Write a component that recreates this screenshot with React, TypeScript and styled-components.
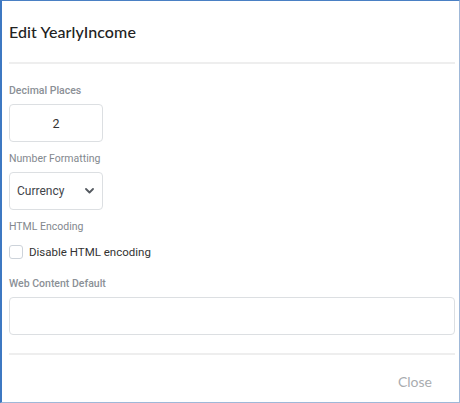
import React from "react";
import styled, { createGlobalStyle } from "styled-components";

const Global = createGlobalStyle`
  html, body { margin: 0; padding: 0; background: #fff; }
  * { box-sizing: border-box; }
`;

const Dialog = styled.div`
  width: 460px;
  height: 403px;
  background: #fff;
  border-top: 1px solid #4a80c4;
  border-left: 2px solid #3d78c2;
  border-right: 1px solid #9fb8d8;
  border-bottom: 1px solid #9fb8d8;
  display: flex;
  flex-direction: column;
  font-family: Roboto, "Liberation Sans", sans-serif;
`;

const Header = styled.div`
  height: 61px;
  display: flex;
  align-items: center;
  padding: 0 7px;
`;

const Title = styled.h1`
  margin: 0;
  font-family: Lato, "Open Sans", sans-serif;
  font-size: 16px;
  font-weight: 500;
  color: #222;
  letter-spacing: 0.1px;
`;

const Divider = styled.div<{ $top?: number }>`
  height: 2px;
  margin: ${(p) => p.$top ?? 0}px 4px 0 7px;
  background: #eeeeee;
`;

const Body = styled.div`
  padding: 20px 4px 0 7px;
  display: flex;
  flex-direction: column;
`;

const Label = styled.div<{ $gap?: number; $strong?: boolean }>`
  font-size: 10.5px;
  line-height: 14px;
  font-weight: ${(p) => (p.$strong ? 500 : 400)};
  color: ${(p) => (p.$strong ? "#8b9096" : "#83888e")};
  margin-top: ${(p) => p.$gap ?? 0}px;
`;

const Field = styled.div<{ $wide?: boolean }>`
  margin-top: 6px;
  width: ${(p) => (p.$wide ? "446px" : "94px")};
  height: 38px;
  border: 1px solid #dcdfe2;
  border-radius: 4px;
  display: flex;
  align-items: center;
  font-size: 12.5px;
  color: #333;
`;

const NumberValue = styled.span`
  flex: 1;
  text-align: center;
  color: #333;
`;

const SelectText = styled.span`
  flex: 1;
  padding-left: 7px;
  font-size: 12px;
  font-weight: 400;
  color: #3f444a;
`;

const Chevron = styled.svg`
  width: 9px;
  height: 6px;
  margin-right: 8px;
`;

const CheckRow = styled.label`
  margin-top: 11px;
  display: flex;
  align-items: center;
  gap: 6px;
  font-size: 11.5px;
  color: #333;
  height: 14px;
`;

const Box = styled.span`
  width: 14px;
  height: 14px;
  border: 1px solid #cdd3da;
  border-radius: 3px;
  background: #fff;
`;

const Footer = styled.div`
  flex: 1;
  display: flex;
  align-items: center;
  justify-content: flex-end;
  padding: 6px 27px 0 0;
`;

const CloseButton = styled.button`
  background: none;
  border: none;
  padding: 0;
  font-family: Lato, "Open Sans", sans-serif;
  font-size: 14px;
  color: #a9acaf;
  cursor: pointer;
`;

export default function App() {
  return (
    <>
      <Global />
      <Dialog>
        <Header>
          <Title>Edit YearlyIncome</Title>
        </Header>
        <Divider />
        <Body>
          <Label $strong>Decimal Places</Label>
          <Field>
            <NumberValue>2</NumberValue>
          </Field>
          <Label $gap={10}>Number Formatting</Label>
          <Field>
            <SelectText>Currency</SelectText>
            <Chevron viewBox="0 0 9 6">
              <path d="M1 1 L4.5 4.5 L8 1" fill="none" stroke="#555a60" strokeWidth="1.8" strokeLinecap="round" strokeLinejoin="round" />
            </Chevron>
          </Field>
          <Label $gap={10}>HTML Encoding</Label>
          <CheckRow>
            <Box />
            Disable HTML encoding
          </CheckRow>
          <Label $gap={18} $strong>Web Content Default</Label>
          <Field $wide />
        </Body>
        <Divider $top={18} />
        <Footer>
          <CloseButton>Close</CloseButton>
        </Footer>
      </Dialog>
    </>
  );
}
